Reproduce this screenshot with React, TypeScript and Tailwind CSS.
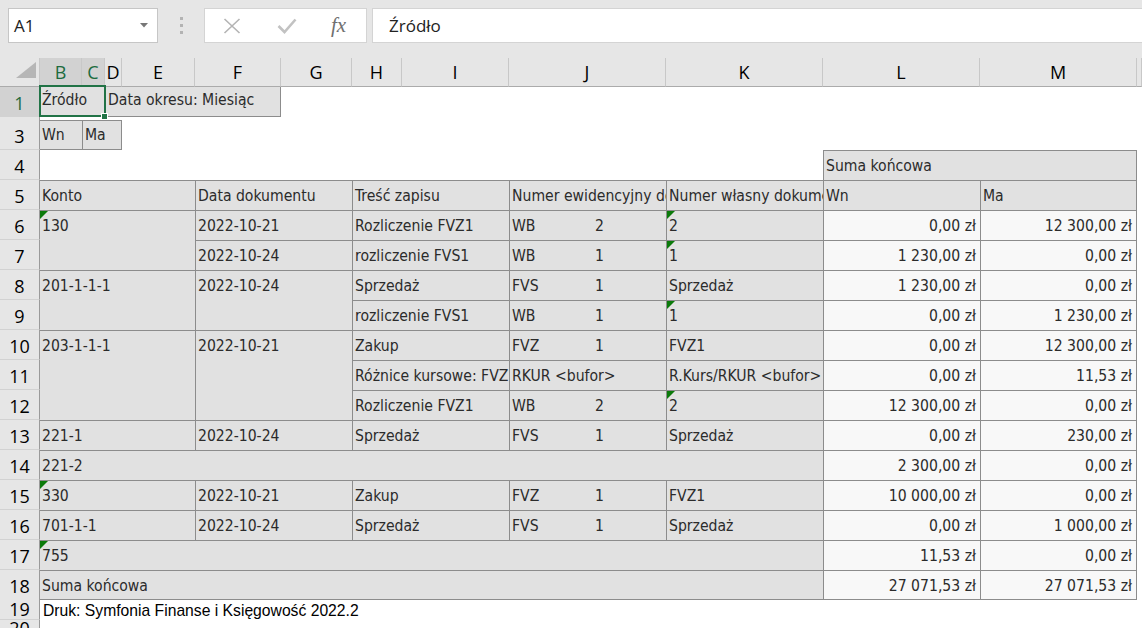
import React from 'react';

type CP = {
  pos: string;
  b?: string;
  v?: boolean;
  tri?: boolean;
  pt?: string;
  children?: React.ReactNode;
};

function C({ pos, b = '', v = false, tri = false, pt = 'pt-[6px]', children }: CP) {
  return (
    <div
      className={`relative overflow-hidden whitespace-nowrap border-[#8c8c8c] leading-[18px] ${pos} ${b} ${pt} ${
        v ? 'bg-[#f8f8f8] text-right pr-[4px]' : 'bg-[#e1e1e1] pl-[2px]'
      }`}
    >
      {tri && (
        <span className="absolute left-0 top-0 w-[8px] h-[8px] bg-[#0b7a0b] [clip-path:polygon(0_0,100%_0,0_100%)]" />
      )}
      {children}
    </div>
  );
}

const colHeads = [
  { l: '', c: 'col-[1/2]', corner: true },
  { l: 'B', c: 'col-[2/3]', sel: true },
  { l: 'C', c: 'col-[3/4]', sel: true },
  { l: 'D', c: 'col-[4/5]' },
  { l: 'E', c: 'col-[5/6]' },
  { l: 'F', c: 'col-[6/7]' },
  { l: 'G', c: 'col-[7/8]' },
  { l: 'H', c: 'col-[8/9]' },
  { l: 'I', c: 'col-[9/10]' },
  { l: 'J', c: 'col-[10/11]' },
  { l: 'K', c: 'col-[11/12]' },
  { l: 'L', c: 'col-[12/13]' },
  { l: 'M', c: 'col-[13/14]' },
  { l: '', c: 'col-[14/15]' },
];

const rowHeads = [
  { l: '1', r: 'row-[2/3]', sel: true },
  { l: '', r: 'row-[3/4]' },
  { l: '3', r: 'row-[4/5]' },
  { l: '4', r: 'row-[5/6]' },
  { l: '5', r: 'row-[6/7]' },
  { l: '6', r: 'row-[7/8]' },
  { l: '7', r: 'row-[8/9]' },
  { l: '8', r: 'row-[9/10]' },
  { l: '9', r: 'row-[10/11]' },
  { l: '10', r: 'row-[11/12]' },
  { l: '11', r: 'row-[12/13]' },
  { l: '12', r: 'row-[13/14]' },
  { l: '13', r: 'row-[14/15]' },
  { l: '14', r: 'row-[15/16]' },
  { l: '15', r: 'row-[16/17]' },
  { l: '16', r: 'row-[17/18]' },
  { l: '17', r: 'row-[18/19]' },
  { l: '18', r: 'row-[19/20]' },
  { l: '19', r: 'row-[20/21]', small: true },
  { l: '20', r: 'row-[21/22]', last: true },
];

type Det = {
  r: string;
  h: string;
  j: string[];
  k: string;
  kt?: boolean;
  l: string;
  m: string;
};

const detail: Det[] = [
  { r: 'row-[7/8]', h: 'Rozliczenie FVZ1', j: ['WB', '2'], k: '2', kt: true, l: '0,00 zł', m: '12 300,00 zł' },
  { r: 'row-[8/9]', h: 'rozliczenie FVS1', j: ['WB', '1'], k: '1', kt: true, l: '1 230,00 zł', m: '0,00 zł' },
  { r: 'row-[9/10]', h: 'Sprzedaż', j: ['FVS', '1'], k: 'Sprzedaż', l: '1 230,00 zł', m: '0,00 zł' },
  { r: 'row-[10/11]', h: 'rozliczenie FVS1', j: ['WB', '1'], k: '1', kt: true, l: '0,00 zł', m: '1 230,00 zł' },
  { r: 'row-[11/12]', h: 'Zakup', j: ['FVZ', '1'], k: 'FVZ1', l: '0,00 zł', m: '12 300,00 zł' },
  { r: 'row-[12/13]', h: 'Różnice kursowe: FVZ1', j: ['RKUR <bufor>'], k: 'R.Kurs/RKUR <bufor>', l: '0,00 zł', m: '11,53 zł' },
  { r: 'row-[13/14]', h: 'Rozliczenie FVZ1', j: ['WB', '2'], k: '2', kt: true, l: '12 300,00 zł', m: '0,00 zł' },
  { r: 'row-[14/15]', h: 'Sprzedaż', j: ['FVS', '1'], k: 'Sprzedaż', l: '0,00 zł', m: '230,00 zł' },
  { r: 'row-[16/17]', h: 'Zakup', j: ['FVZ', '1'], k: 'FVZ1', l: '10 000,00 zł', m: '0,00 zł' },
  { r: 'row-[17/18]', h: 'Sprzedaż', j: ['FVS', '1'], k: 'Sprzedaż', l: '0,00 zł', m: '1 000,00 zł' },
];

export default function App() {
  return (
    <div className="w-[1142px] h-[628px] overflow-hidden bg-white">
      {/* Formula bar */}
      <div className="h-[58px] bg-[#e6e6e6] flex items-start pt-[8px] pl-[8px] [font-family:'Open_Sans',sans-serif]">
        <div className="w-[150px] h-[35px] bg-white border border-[#c6c6c6] flex items-center justify-between pl-[5px] pr-[9px]">
          <span className="text-[17px] text-[#222] leading-none">A1</span>
          <svg width="8" height="5" viewBox="0 0 8 5">
            <path d="M0 0 L8 0 L4 4.5 Z" fill="#777" />
          </svg>
        </div>
        <div className="w-[46px] h-[35px] flex flex-col items-center justify-center gap-[4px]">
          <span className="w-[3px] h-[3px] bg-[#b3b3b3]" />
          <span className="w-[3px] h-[3px] bg-[#b3b3b3]" />
          <span className="w-[3px] h-[3px] bg-[#b3b3b3]" />
        </div>
        <div className="w-[163px] h-[35px] bg-white border border-[#d4d4d4] flex items-center pl-[18px]">
          <svg width="18" height="16" viewBox="0 0 18 16">
            <path d="M1.5 1 L16.5 15 M16.5 1 L1.5 15" stroke="#b4b4b4" strokeWidth="1.6" fill="none" />
          </svg>
          <svg className="ml-[36px]" width="20" height="16" viewBox="0 0 20 16">
            <path d="M1.5 8 L7.5 14 L18.5 1.5" stroke="#c2c2c2" strokeWidth="2.6" fill="none" />
          </svg>
          <span className="ml-[34px] text-[21px] leading-none italic text-[#707070] [font-family:'Liberation_Serif',serif]">
            fx
          </span>
        </div>
        <div className="ml-[5px] flex-1 h-[35px] bg-white border border-[#d4d4d4] border-r-0 flex items-center pl-[16px]">
          <span className="text-[17px] text-[#222] leading-none">Źródło</span>
        </div>
      </div>

      {/* Sheet */}
      <div className="grid grid-cols-[40px_42px_23px_17px_73px_86px_71px_50px_107px_157px_157px_157px_157px_1fr] grid-rows-[29px_30px_3px_30px_repeat(15,30px)_20px_30px] text-[15.6px] text-[#2b2b2b] [font-family:'DejaVu_Sans_Condensed','DejaVu_Sans',sans-serif] [font-stretch:semi-condensed]">
        {/* column headers */}
        {colHeads.map((h, i) => (
          <div
            key={'c' + i}
            className={`${h.c} row-[1/2] relative flex items-center justify-center border-b border-b-[#ababab] border-r border-r-[#c8c8c8] text-[18px] [font-family:'Open_Sans',sans-serif] [font-stretch:normal] ${
              h.sel ? 'bg-[#d2d2d2] text-[#1d6b3e]' : 'bg-[#e6e6e6] text-black'
            }`}
          >
            {h.corner ? (
              <svg className="absolute left-0 top-0" width="40" height="29" viewBox="0 0 40 29">
                <path d="M36 4 L36 20 L16 20 Z" fill="#b6b6b6" />
              </svg>
            ) : (
              h.l
            )}
          </div>
        ))}

        {/* row headers */}
        {rowHeads.map((h, i) => (
          <div
            key={'r' + i}
            className={`col-[1/2] ${h.r} flex justify-center border-r border-r-[#9a9a9a] border-b border-b-[#d2d2d2] text-[18px] [font-family:'Open_Sans',sans-serif] [font-stretch:normal] overflow-hidden ${
              h.small
                ? 'items-start leading-[20px] -mt-[1px]'
                : h.last
                ? 'items-start leading-[16px]'
                : 'items-center pt-[3px]'
            } ${h.sel ? 'bg-[#d2d2d2] text-[#1d6b3e]' : 'bg-[#e6e6e6] text-black'}`}
          >
            {h.l}
          </div>
        ))}

        {/* row 1 */}
        <C pos="col-[2/4] row-[2/3]" b="border-b" pt="pt-[4px]">Źródło</C>
        <C pos="col-[4/7] row-[2/3]" b="border-b border-l border-r" pt="pt-[4px]">Data okresu: Miesiąc</C>
        <div className="col-[2/4] row-[2/3] relative z-10 pointer-events-none">
          <div className="absolute -left-px -top-[2px] -right-px bottom-0 border-2 border-[#217346]" />
          <div className="absolute -right-[3px] -bottom-[3px] w-[7px] h-[7px] bg-[#217346] border border-white" />
        </div>

        {/* row 3 */}
        <C pos="col-[2/3] row-[4/5]" b="border-t border-b" pt="pt-[5px]">Wn</C>
        <C pos="col-[3/5] row-[4/5]" b="border-t border-b border-l border-r" pt="pt-[5px]">Ma</C>

        {/* row 4 */}
        <C pos="col-[12/14] row-[5/6]" b="border-t border-l border-r">Suma końcowa</C>

        {/* row 5 headers */}
        <C pos="col-[2/6] row-[6/7]" b="border-t">Konto</C>
        <C pos="col-[6/8] row-[6/7]" b="border-t border-l">Data dokumentu</C>
        <C pos="col-[8/10] row-[6/7]" b="border-t border-l">Treść zapisu</C>
        <C pos="col-[10/11] row-[6/7]" b="border-t border-l">Numer ewidencyjny dokumentu</C>
        <C pos="col-[11/12] row-[6/7]" b="border-t border-l">Numer własny dokumentu</C>
        <C pos="col-[12/13] row-[6/7]" b="border-t border-l">Wn</C>
        <C pos="col-[13/14] row-[6/7]" b="border-t border-l border-r">Ma</C>

        {/* Konto / date labels */}
        <C pos="col-[2/6] row-[7/9]" b="border-t" tri>130</C>
        <C pos="col-[6/8] row-[7/8]" b="border-t border-l">2022-10-21</C>
        <C pos="col-[6/8] row-[8/9]" b="border-t border-l">2022-10-24</C>
        <C pos="col-[2/6] row-[9/11]" b="border-t">201-1-1-1</C>
        <C pos="col-[6/8] row-[9/11]" b="border-t border-l">2022-10-24</C>
        <C pos="col-[2/6] row-[11/14]" b="border-t">203-1-1-1</C>
        <C pos="col-[6/8] row-[11/14]" b="border-t border-l">2022-10-21</C>
        <C pos="col-[2/6] row-[14/15]" b="border-t">221-1</C>
        <C pos="col-[6/8] row-[14/15]" b="border-t border-l">2022-10-24</C>
        <C pos="col-[2/12] row-[15/16]" b="border-t">221-2</C>
        <C pos="col-[2/6] row-[16/17]" b="border-t" tri>330</C>
        <C pos="col-[6/8] row-[16/17]" b="border-t border-l">2022-10-21</C>
        <C pos="col-[2/6] row-[17/18]" b="border-t">701-1-1</C>
        <C pos="col-[6/8] row-[17/18]" b="border-t border-l">2022-10-24</C>
        <C pos="col-[2/12] row-[18/19]" b="border-t" tri>755</C>
        <C pos="col-[2/12] row-[19/20]" b="border-t border-b">Suma końcowa</C>

        {/* detail rows */}
        {detail.map((d, i) => (
          <React.Fragment key={'d' + i}>
            <C pos={`col-[8/10] ${d.r}`} b="border-t border-l">{d.h}</C>
            <C pos={`col-[10/11] ${d.r}`} b="border-t border-l">
              {d.j.length === 2 ? (
                <span className="inline-flex">
                  <span className="w-[83px] inline-block">{d.j[0]}</span>
                  <span>{d.j[1]}</span>
                </span>
              ) : (
                d.j[0]
              )}
            </C>
            <C pos={`col-[11/12] ${d.r}`} b="border-t border-l" tri={d.kt}>{d.k}</C>
            <C pos={`col-[12/13] ${d.r}`} b="border-t border-l" v>{d.l}</C>
            <C pos={`col-[13/14] ${d.r}`} b="border-t border-l border-r" v>{d.m}</C>
          </React.Fragment>
        ))}

        {/* value-only rows */}
        <C pos="col-[12/13] row-[15/16]" b="border-t border-l" v>2 300,00 zł</C>
        <C pos="col-[13/14] row-[15/16]" b="border-t border-l border-r" v>0,00 zł</C>
        <C pos="col-[12/13] row-[18/19]" b="border-t border-l" v>11,53 zł</C>
        <C pos="col-[13/14] row-[18/19]" b="border-t border-l border-r" v>0,00 zł</C>
        <C pos="col-[12/13] row-[19/20]" b="border-t border-l border-b" v>27 071,53 zł</C>
        <C pos="col-[13/14] row-[19/20]" b="border-t border-l border-r border-b" v>27 071,53 zł</C>

        {/* row 19 */}
        <div className="col-[2/14] row-[20/21] pl-[3px] pt-[2px] leading-[18px] whitespace-nowrap text-black text-[15.7px] [font-family:'Liberation_Sans',Arial,sans-serif] [font-stretch:normal]">
          Druk: Symfonia Finanse i Księgowość 2022.2
        </div>
      </div>
    </div>
  );
}
